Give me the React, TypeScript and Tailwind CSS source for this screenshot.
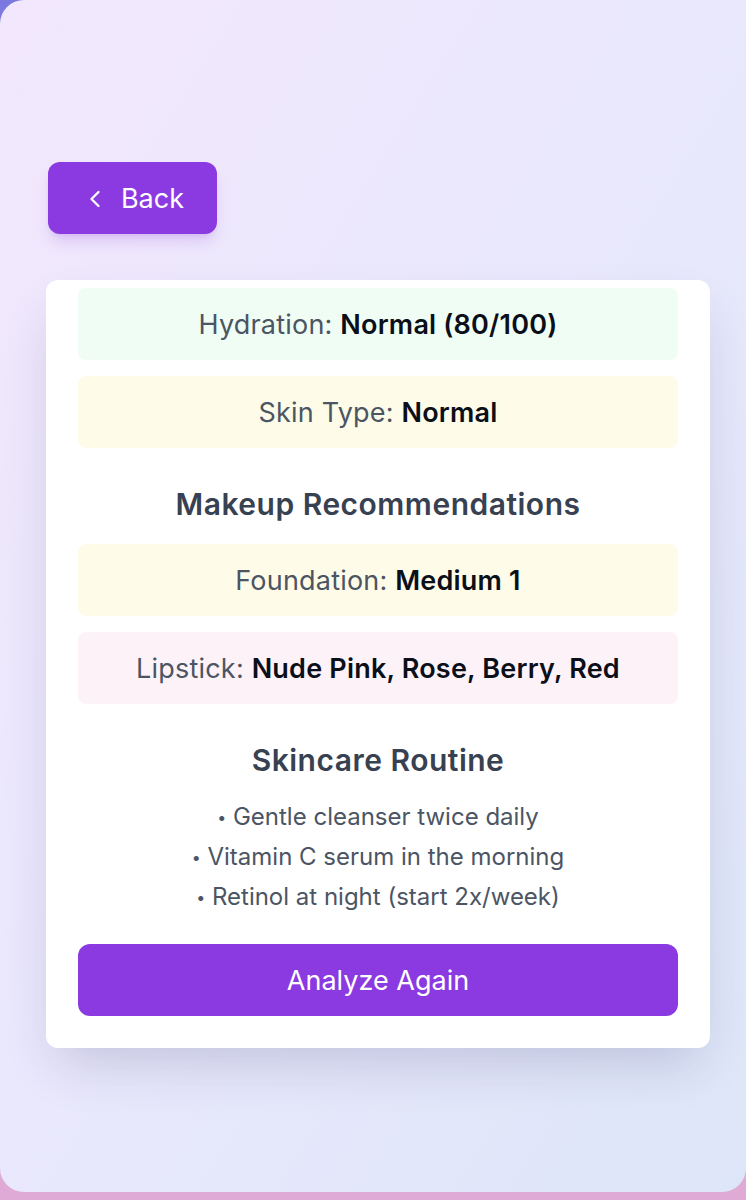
import { ChevronLeft } from "lucide-react";

const results = [
  { label: "Hydration", value: "Normal (80/100)", tone: "bg-[#f0fdf4]" },
  { label: "Skin Type", value: "Normal", tone: "bg-[#fefce8]" },
];

const makeup = [
  { label: "Foundation", value: "Medium 1", tone: "bg-[#fefce8]" },
  { label: "Lipstick", value: "Nude Pink, Rose, Berry, Red", tone: "bg-[#fdf2f8]" },
];

const routine = [
  "Gentle cleanser twice daily",
  "Vitamin C serum in the morning",
  "Retinol at night (start 2x/week)",
];

function ResultRow({ label, value, tone }: { label: string; value: string; tone: string }) {
  return (
    <div className={`h-[72px] pt-[2px] rounded-lg ${tone} flex items-center justify-center text-[27px] tracking-[0.2px]`}>
      <span className="text-[#4b5563]">{label}:&nbsp;</span>
      <span className="font-semibold text-[#0b0f19]">{value}</span>
    </div>
  );
}

export default function App() {
  return (
    <div
      className="min-h-[1200px] bg-gradient-to-b from-[#7b78e0] via-[#c9a6dc] to-[#e0aad6]"
      style={{ fontFamily: "Inter, 'Noto Sans', sans-serif" }}
    >
      <div className="h-[1192px] rounded-tl-[24px] rounded-b-[24px] bg-gradient-to-br from-[#f2e7fc] via-[#e9e8fc] to-[#dde6f8] pt-[162px] px-[46px]">
        {/* Back button */}
        <button className="ml-[2px] h-[72px] w-[169px] pt-[2px] rounded-xl bg-[#8a3ae0] text-white text-[27px] flex items-center justify-center gap-[12px] shadow-lg shadow-[#8a3ae0]/20">
          <ChevronLeft size={28} strokeWidth={2} />
          <span>Back</span>
        </button>

        {/* Results card */}
        <div className="mt-[46px] w-[664px] rounded-xl bg-white px-[32px] pt-[8px] pb-[32px] shadow-2xl shadow-[#2b2f6b]/20">
          <div className="flex flex-col gap-[16px]">
            {results.map((r) => (
              <ResultRow key={r.label} {...r} />
            ))}
          </div>

          <h2 className="mt-[32px] mb-[16px] text-center text-[30px] leading-[48px] font-semibold tracking-[0.5px] text-[#374151]">
            Makeup Recommendations
          </h2>

          <div className="flex flex-col gap-[16px]">
            {makeup.map((r) => (
              <ResultRow key={r.label} {...r} />
            ))}
          </div>

          <h2 className="mt-[32px] text-center text-[30px] leading-[48px] font-semibold tracking-[0.5px] text-[#374151]">
            Skincare Routine
          </h2>

          <ul className="mt-[13px] text-center text-[24px] leading-[40px] text-[#4b5563]">
            {routine.map((item) => (
              <li key={item}>
                <span className="text-[16px] align-[2px]">•</span> {item}
              </li>
            ))}
          </ul>

          <button className="mt-[27px] h-[72px] w-full pt-[2px] rounded-xl bg-[#8a3ae0] text-white text-[27px]">
            Analyze Again
          </button>
        </div>
      </div>
    </div>
  );
}
